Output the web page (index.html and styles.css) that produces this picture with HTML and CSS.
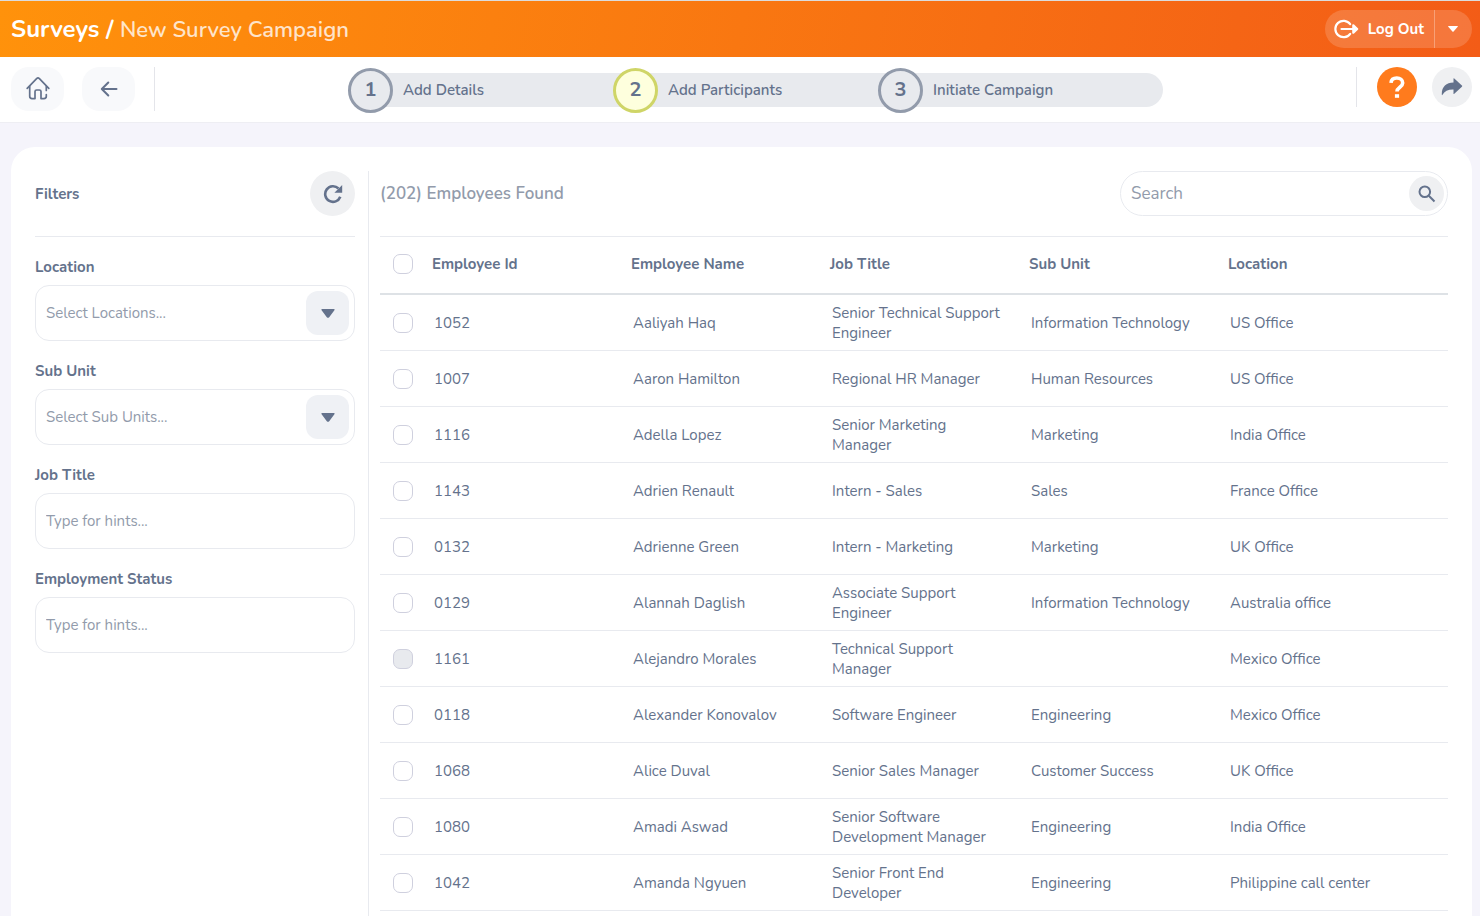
FILE: index.html
```html
<!DOCTYPE html>
<html lang="en">
<head>
    <meta charset="UTF-8">
    <meta name="viewport" content="width=device-width, initial-scale=1.0">
    <title>Surveys / New Survey Campaign</title>
    <link rel="stylesheet" href="styles.css">
</head>
<body>
    <header class="top-bar">
        <h1 class="page-title">Surveys / <span class="page-subtitle">New Survey Campaign</span></h1>
        <div class="logout-group">
            <button type="button" class="logout-button">
                <svg width="26" height="20" viewBox="0 0 26 20" fill="none" stroke="currentColor" stroke-width="2.2" stroke-linecap="round" stroke-linejoin="round">
                    <path d="M17.200 5.200A8.200 8.200 0 1 0 17.200 14.800"/>
                    <path d="M8.500 10H24M20.300 6.300 24.200 10l-3.900 3.700z"/>
                </svg>
                Log Out
            </button>
            <button type="button" class="logout-more" aria-label="More options">
                <svg width="10" height="6" viewBox="0 0 10 6" fill="currentColor"><path d="M.6 0h8.8q.9 0 .3.8L5.6 5.4q-.6.6-1.2 0L.3.8Q-.3 0 .6 0z"/></svg>
            </button>
        </div>
    </header>

    <nav class="toolbar">
        <div class="toolbar-left">
            <button type="button" class="nav-button" aria-label="Home">
                <svg width="24" height="24" viewBox="0 0 24 24" fill="none" stroke="currentColor" stroke-width="1.7" stroke-linecap="round" stroke-linejoin="round">
                    <path d="M1.200 11.300 10.600 1.600q1.400-1.300 2.800 0l9.400 9.700"/>
                    <path d="M3.700 9.500v9.800q0 2.300 2.300 2.300h3v-7q0-1.600 1.600-1.600h2.800q1.600 0 1.600 1.600v7h3q2.300 0 2.300-2.300v-1.800M20.300 13.500v-4"/>
                </svg>
            </button>
            <button type="button" class="nav-button" aria-label="Back">
                <svg width="18" height="16" viewBox="0 0 18 16" fill="none" stroke="currentColor" stroke-width="2" stroke-linecap="round" stroke-linejoin="round">
                    <path d="M16.500 8H2M8.300 1.500 1.800 8l6.500 6.500"/>
                </svg>
            </button>
        </div>
        <ol class="steps">
            <li class="step"><span class="step-number">1</span>Add Details</li>
            <li class="step active"><span class="step-number">2</span>Add Participants</li>
            <li class="step"><span class="step-number">3</span>Initiate Campaign</li>
        </ol>
        <div class="toolbar-right">
            <button type="button" class="round-button help" aria-label="Help">
                <svg width="16" height="22" viewBox="0 0 16 22" fill="none" stroke="currentColor" stroke-width="3.600">
                    <path d="M2 6.800C2.300 3.600 4.700 2 7.800 2c3.400 0 5.900 1.900 5.900 5 0 4.200-5.700 4.300-5.700 8.500"/>
                    <path d="M5.900 20h4.200"/>
                </svg>
            </button>
            <button type="button" class="round-button share" aria-label="Share">
                <svg width="22" height="18" viewBox="0 0 22 18" fill="currentColor">
                    <path d="M12.500.8q0-1 .8-.3l7.600 7q.7.600 0 1.200l-7.600 7q-.8.700-.8-.3v-4Q4.500 11.200 1.500 16.800q-.6.800-.7-.2C.5 9 5 4.500 12.500 4.500z"/>
                </svg>
            </button>
        </div>
    </nav>

    <main class="content">
        <div class="card">
            <aside class="filters">
                <div class="filters-head">
                    <h2 class="filters-title">Filters</h2>
                    <button type="button" class="reset-button" aria-label="Reset filters">
                        <svg width="20" height="20" viewBox="0 0 20 20">
                            <path d="M17.300 12.800A7.800 7.800 0 1 1 15.500 4.500" fill="none" stroke="currentColor" stroke-width="2.600"/>
                            <path d="M19.200 1v7.800h-7.800z" fill="currentColor"/>
                        </svg>
                    </button>
                </div>
                <div class="field">
                    <label for="location">Location</label>
                    <div class="select-wrap">
                        <select id="location" class="control">
                            <option>Select Locations...</option>
                        </select>
                        <span class="select-arrow"><svg width="14" height="9" viewBox="0 0 14 9" fill="currentColor"><path d="M1.200 0h11.600q1.600 0 .6 1.300L8.200 8.200q-1.200 1.200-2.400 0L.6 1.300Q-.4 0 1.200 0z"/></svg></span>
                    </div>
                </div>
                <div class="field">
                    <label for="sub-unit">Sub Unit</label>
                    <div class="select-wrap">
                        <select id="sub-unit" class="control">
                            <option>Select Sub Units...</option>
                        </select>
                        <span class="select-arrow"><svg width="14" height="9" viewBox="0 0 14 9" fill="currentColor"><path d="M1.200 0h11.600q1.600 0 .6 1.300L8.200 8.200q-1.200 1.200-2.400 0L.6 1.300Q-.4 0 1.200 0z"/></svg></span>
                    </div>
                </div>
                <div class="field">
                    <label for="job-title">Job Title</label>
                    <input type="text" id="job-title" class="control" placeholder="Type for hints...">
                </div>
                <div class="field">
                    <label for="employment-status">Employment Status</label>
                    <input type="text" id="employment-status" class="control" placeholder="Type for hints...">
                </div>
            </aside>

            <section class="results">
                <div class="results-head">
                    <h2 class="results-count">(202) Employees Found</h2>
                    <div class="search">
                        <input type="text" class="search-input" placeholder="Search" aria-label="Search">
                        <button type="button" class="search-button" aria-label="Search employees">
                            <svg width="18" height="18" viewBox="0 0 18 18" fill="none" stroke="currentColor" stroke-width="2">
                                <circle cx="6.800" cy="6.800" r="5.300"/>
                                <path d="m10.800 10.800 5.700 5.700"/>
                            </svg>
                        </button>
                    </div>
                </div>
                <table class="employees">
                    <colgroup>
                        <col class="col-check">
                        <col>
                        <col>
                        <col>
                        <col>
                        <col class="col-location">
                    </colgroup>
                    <thead>
                        <tr>
                            <th><input type="checkbox" aria-label="Select all"></th>
                            <th>Employee Id</th>
                            <th>Employee Name</th>
                            <th>Job Title</th>
                            <th>Sub Unit</th>
                            <th>Location</th>
                        </tr>
                    </thead>
                    <tbody>
                        <tr>
                            <td><input type="checkbox" aria-label="Select 1052"></td>
                            <td>1052</td>
                            <td>Aaliyah Haq</td>
                            <td>Senior Technical Support Engineer</td>
                            <td>Information Technology</td>
                            <td>US Office</td>
                        </tr>
                        <tr>
                            <td><input type="checkbox" aria-label="Select 1007"></td>
                            <td>1007</td>
                            <td>Aaron Hamilton</td>
                            <td>Regional HR Manager</td>
                            <td>Human Resources</td>
                            <td>US Office</td>
                        </tr>
                        <tr>
                            <td><input type="checkbox" aria-label="Select 1116"></td>
                            <td>1116</td>
                            <td>Adella Lopez</td>
                            <td>Senior Marketing Manager</td>
                            <td>Marketing</td>
                            <td>India Office</td>
                        </tr>
                        <tr>
                            <td><input type="checkbox" aria-label="Select 1143"></td>
                            <td>1143</td>
                            <td>Adrien Renault</td>
                            <td>Intern - Sales</td>
                            <td>Sales</td>
                            <td>France Office</td>
                        </tr>
                        <tr>
                            <td><input type="checkbox" aria-label="Select 0132"></td>
                            <td>0132</td>
                            <td>Adrienne Green</td>
                            <td>Intern - Marketing</td>
                            <td>Marketing</td>
                            <td>UK Office</td>
                        </tr>
                        <tr>
                            <td><input type="checkbox" aria-label="Select 0129"></td>
                            <td>0129</td>
                            <td>Alannah Daglish</td>
                            <td>Associate Support Engineer</td>
                            <td>Information Technology</td>
                            <td>Australia office</td>
                        </tr>
                        <tr>
                            <td><input type="checkbox" aria-label="Select 1161" disabled></td>
                            <td>1161</td>
                            <td>Alejandro Morales</td>
                            <td>Technical Support Manager</td>
                            <td></td>
                            <td>Mexico Office</td>
                        </tr>
                        <tr>
                            <td><input type="checkbox" aria-label="Select 0118"></td>
                            <td>0118</td>
                            <td>Alexander Konovalov</td>
                            <td>Software Engineer</td>
                            <td>Engineering</td>
                            <td>Mexico Office</td>
                        </tr>
                        <tr>
                            <td><input type="checkbox" aria-label="Select 1068"></td>
                            <td>1068</td>
                            <td>Alice Duval</td>
                            <td>Senior Sales Manager</td>
                            <td>Customer Success</td>
                            <td>UK Office</td>
                        </tr>
                        <tr>
                            <td><input type="checkbox" aria-label="Select 1080"></td>
                            <td>1080</td>
                            <td>Amadi Aswad</td>
                            <td>Senior Software Development Manager</td>
                            <td>Engineering</td>
                            <td>India Office</td>
                        </tr>
                        <tr>
                            <td><input type="checkbox" aria-label="Select 1042"></td>
                            <td>1042</td>
                            <td>Amanda Ngyuen</td>
                            <td>Senior Front End Developer</td>
                            <td>Engineering</td>
                            <td>Philippine call center</td>
                        </tr>
                    </tbody>
                </table>
            </section>
        </div>
    </main>
</body>
</html>
```
FILE: styles.css
```css
* {
    box-sizing: border-box;
}
body {
    margin: 0;
    height: 100vh;
    display: flex;
    flex-direction: column;
    overflow: hidden;
    font-family: Nunito, Lato, sans-serif;
    font-size: 15px;
    line-height: 20px;
    color: #64728c;
    background-color: #f5f4fb;
    border-top: 1px solid #dcdcdc;
}
button, input, select {
    font: inherit;
    color: inherit;
}
button {
    display: flex;
    align-items: center;
    justify-content: center;
    padding: 0;
    border: none;
    cursor: pointer;
}
h1, h2 {
    margin: 0;
}

/* Orange bar */
.top-bar {
    display: flex;
    align-items: center;
    justify-content: space-between;
    flex-shrink: 0;
    height: 56px;
    padding: 0 8px 0 11px;
    background: linear-gradient(100deg, #ff920b, #f35c17);
    color: white;
}
.page-title {
    font-size: 24px;
    line-height: 32px;
    font-weight: 700;
}
.page-subtitle {
    font-size: 22px;
    font-weight: 600;
    color: rgba(255, 255, 255, 0.78);
}
.logout-group {
    display: flex;
    height: 38px;
    border-radius: 19px;
    overflow: hidden;
    background-color: rgba(255, 255, 255, 0.16);
}
.logout-button {
    gap: 9px;
    padding: 0 10px 0 8px;
    background: none;
    font-weight: 700;
}
.logout-more {
    width: 38px;
    padding-right: 2px;
    background: none;
    border-left: 1px solid rgba(255, 255, 255, 0.3);
}

/* Steps bar */
.toolbar {
    display: flex;
    align-items: flex-start;
    justify-content: space-between;
    flex-shrink: 0;
    height: 66px;
    padding: 10px 8px 0 11px;
    background-color: white;
    border-bottom: 1px solid #eeeef3;
}
.toolbar-left {
    display: flex;
    gap: 18px;
    padding-right: 19px;
    border-right: 1px solid #e4e5ea;
}
.nav-button {
    width: 53px;
    height: 44px;
    border-radius: 18px;
    background-color: #f8f9fb;
}
.steps {
    display: flex;
    align-items: center;
    height: 34px;
    margin: 6px 0 0;
    padding: 0 20px 0 0;
    list-style: none;
    border-radius: 17px;
    background-color: #e8eaee;
}
.step {
    display: flex;
    align-items: center;
    gap: 10px;
    width: 265px;
    font-weight: 600;
}
.step-number {
    display: flex;
    align-items: center;
    justify-content: center;
    width: 45px;
    height: 45px;
    border: 3px solid #929bab;
    border-radius: 50%;
    background-color: #e8eaee;
    font-size: 20px;
    font-weight: 700;
}
.step.active .step-number {
    border-color: #cfd567;
    background-color: #feffdd;
}
.toolbar-right {
    display: flex;
    gap: 15px;
    padding-left: 20px;
    border-left: 1px solid #e4e5ea;
}
.round-button {
    width: 40px;
    height: 40px;
    border-radius: 50%;
    background-color: #eff0f2;
}
.round-button.help {
    background-color: #ff7b1d;
    color: white;
}

/* Main card */
.content {
    display: flex;
    flex: 1;
    min-height: 0;
    padding: 24px 8px 0 11px;
}
.card {
    display: flex;
    flex: 1;
    min-width: 0;
    padding: 24px 24px 0;
    overflow: hidden;
    border-radius: 24px 24px 0 0;
    background-color: white;
}
.filters {
    flex: 0 0 334px;
    padding-right: 13px;
    border-right: 1px solid #e8eaef;
}
.filters-head, .results-head {
    display: flex;
    align-items: center;
    justify-content: space-between;
    padding-bottom: 20px;
    border-bottom: 1px solid #e8eaef;
}
.filters-title {
    font-size: 15px;
    font-weight: 700;
}
.reset-button {
    width: 45px;
    height: 45px;
    border-radius: 50%;
    background-color: #eff0f2;
}
.field {
    display: flex;
    flex-direction: column;
    gap: 8px;
    margin-top: 20px;
}
.field label {
    font-weight: 700;
}
.select-wrap {
    position: relative;
}
.control {
    display: block;
    width: 100%;
    height: 56px;
    padding: 0 10px;
    border: 1px solid #e8eaef;
    border-radius: 14px;
    background-color: white;
    color: #929bab;
    appearance: none;
}
.control::placeholder, .search-input::placeholder {
    color: #929bab;
    opacity: 1;
}
.select-arrow {
    position: absolute;
    top: 6px;
    right: 6px;
    display: flex;
    align-items: center;
    justify-content: center;
    width: 43px;
    height: 44px;
    border-radius: 12px;
    background-color: #eff1f5;
    pointer-events: none;
}

/* Employee list */
.results {
    flex: 1;
    min-width: 0;
    padding-left: 11px;
}
.results-count {
    font-size: 17px;
    font-weight: 600;
    color: #929bab;
}
.search {
    display: flex;
    align-items: center;
    width: 328px;
    height: 45px;
    padding-right: 3px;
    border: 1px solid #e8eaef;
    border-radius: 23px;
}
.search-input {
    flex: 1;
    min-width: 0;
    padding: 0 10px;
    border: none;
    background: none;
    font-size: 17px;
}
.search-button {
    width: 35px;
    height: 35px;
    border-radius: 50%;
    background-color: #eff0f2;
}
.employees {
    width: 100%;
    table-layout: fixed;
    border-spacing: 0;
    text-align: left;
}
.col-check {
    width: 44px;
}
.col-location {
    width: 228px;
}
.employees th {
    height: 58px;
    padding: 0 8px 2px;
    border-bottom: 2px solid #dee2e6;
    font-weight: 700;
}
.employees td {
    height: 56px;
    padding: 0 16px 0 10px;
    border-bottom: 1px solid #e8eaef;
}
.employees th:first-child, .employees td:first-child {
    padding-left: 13px;
    padding-right: 0;
}
.employees input {
    display: block;
    width: 20px;
    height: 20px;
    margin: 0;
    border: 1px solid #cfd0de;
    border-radius: 7px;
    background-color: white;
    appearance: none;
}
.employees input:disabled {
    background-color: #e8eaee;
}
```
